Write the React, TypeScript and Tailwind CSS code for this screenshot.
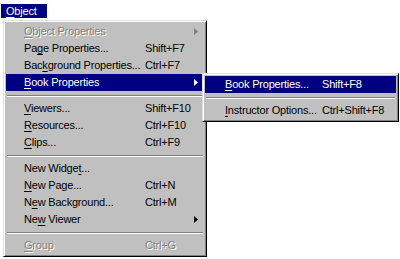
import React from 'react';

type Item =
  | { sep: true }
  | {
      sep?: false;
      label: React.ReactNode;
      key?: string;
      disabled?: boolean;
      active?: boolean;
      sub?: boolean;
    };

const u = (s: string) => <span className="underline underline-offset-[2px]">{s}</span>;

const mainItems: Item[] = [
  { label: <>{u('O')}bject Properties</>, disabled: true, sub: true },
  { label: <>Pa{u('g')}e Properties...</>, key: 'Shift+F7' },
  { label: <>Bac{u('k')}ground Properties...</>, key: 'Ctrl+F7' },
  { label: <>{u('B')}ook Properties</>, active: true, sub: true },
  { sep: true },
  { label: <>{u('V')}iewers...</>, key: 'Shift+F10' },
  { label: <>{u('R')}esources...</>, key: 'Ctrl+F10' },
  { label: <>{u('C')}lips...</>, key: 'Ctrl+F9' },
  { sep: true },
  { label: <>New Widge{u('t')}...</> },
  { label: <>{u('N')}ew Page...</>, key: 'Ctrl+N' },
  { label: <>N{u('e')}w Background...</>, key: 'Ctrl+M' },
  { label: <>Ne{u('w')} Viewer</>, sub: true },
  { sep: true },
  { label: <>{u('G')}roup</>, key: 'Ctrl+G', disabled: true },
];

const subItems: Item[] = [
  { label: <>{u('B')}ook Properties...</>, key: 'Shift+F8', active: true },
  { sep: true },
  { label: <>{u('I')}nstructor Options...</>, key: 'Ctrl+Shift+F8' },
];

const Arrow = ({ color }: { color: string }) => (
  <svg width="4" height="7" viewBox="0 0 4 7" className="block">
    <path d="M0 0 L4 3.5 L0 7 Z" fill={color} />
  </svg>
);

const Menu = ({ items, labelW, pl }: { items: Item[]; labelW: string; pl: string }) => (
  <div className="border border-t-[#dfdfdf] border-l-[#dfdfdf] border-r-black border-b-black bg-[#c0c0c0] shadow-[inset_1px_1px_#fff,inset_-1px_-1px_#808080] p-[2px]">
    {items.map((it, i) => {
      if (it.sep) {
        return (
          <div key={i} className="h-[9px] flex flex-col justify-center px-[1px]">
            <div className="h-[1px] bg-[#808080]" />
            <div className="h-[1px] bg-white" />
          </div>
        );
      }
      const txt = it.active ? 'text-white' : it.disabled ? 'text-[#808080] [text-shadow:1px_1px_0_#fff]' : 'text-black';
      return (
        <div key={i} className={`h-[17px] flex items-center ${pl} ${it.active ? 'bg-[#000080]' : ''} ${txt}`}>
          <div className={`${labelW} shrink-0 whitespace-nowrap`}>{it.label}</div>
          <div className="flex-1 whitespace-nowrap">{it.key}</div>
          {it.sub && (
            <div className="pr-[6px]">
              <Arrow color={it.active ? '#fff' : it.disabled ? '#808080' : '#000'} />
            </div>
          )}
        </div>
      );
    })}
  </div>
);

export default function App() {
  return (
    <div className="relative w-[400px] h-[259px] bg-white overflow-hidden text-[11px] leading-none tracking-[-0.2px] font-['Liberation_Sans',Arial,sans-serif]">
      <div className="pt-[4px] pl-[1px]">
        <div className="inline-flex items-center h-[14px] w-[46px] pl-[5px] bg-[#000080] text-white">
          {u('O')}bject
        </div>
      </div>
      <div className="absolute left-[3px] top-[20px] w-[204px]">
        <Menu items={mainItems} labelW="w-[121px]" pl="pl-[18px]" />
      </div>
      <div className="absolute left-[202px] top-[73px] w-[197px]">
        <Menu items={subItems} labelW="w-[97px]" pl="pl-[20px]" />
      </div>
    </div>
  );
}
